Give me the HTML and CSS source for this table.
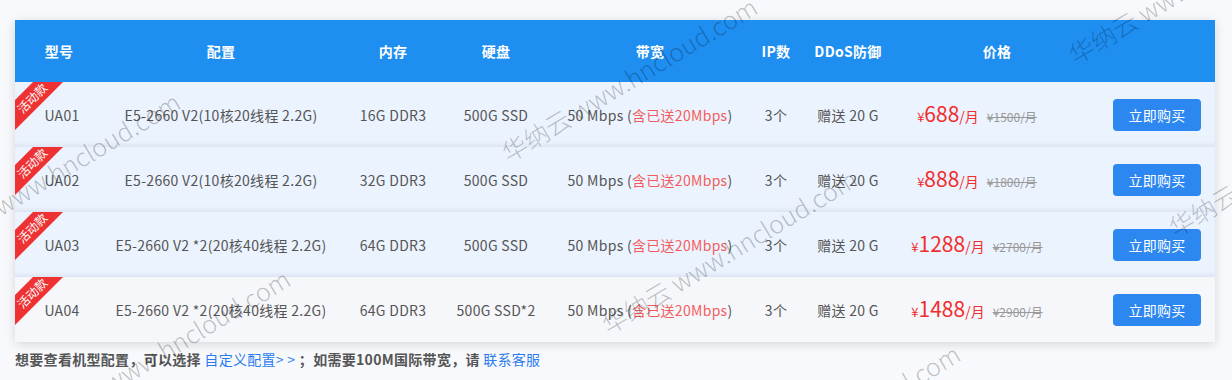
FILE: index.html
```html
<!DOCTYPE html>
<html lang="zh-CN">
<head>
<meta charset="utf-8">
<title>华纳云 产品价格</title>
<link rel="stylesheet" href="styles.css">
</head>
<body>
<div class="page">
  <div class="table">
    <div class="row head">
      <div>型号</div><div>配置</div><div>内存</div><div>硬盘</div><div>带宽</div><div>IP数</div><div>DDoS防御</div><div>价格</div><div></div>
    </div>
    <div class="row item">
      <div class="ribbon"><span>活动款</span></div>
      <div class="model">UA01</div><div>E5-2660 V2(10核20线程 2.2G)</div><div>16G DDR3</div><div>500G SSD</div>
      <div>50 Mbps (<span class="gift">含已送20Mbps</span>)</div><div>3个</div><div>赠送 20 G</div>
      <div class="price"><span class="yen">¥</span><span class="num">688</span><span class="unit">/月</span><span class="old">¥1500/月</span></div>
      <div><a class="buy">立即购买</a></div>
    </div>
    <div class="row item">
      <div class="ribbon"><span>活动款</span></div>
      <div class="model">UA02</div><div>E5-2660 V2(10核20线程 2.2G)</div><div>32G DDR3</div><div>500G SSD</div>
      <div>50 Mbps (<span class="gift">含已送20Mbps</span>)</div><div>3个</div><div>赠送 20 G</div>
      <div class="price"><span class="yen">¥</span><span class="num">888</span><span class="unit">/月</span><span class="old">¥1800/月</span></div>
      <div><a class="buy">立即购买</a></div>
    </div>
    <div class="row item">
      <div class="ribbon"><span>活动款</span></div>
      <div class="model">UA03</div><div>E5-2660 V2 *2(20核40线程 2.2G)</div><div>64G DDR3</div><div>500G SSD</div>
      <div>50 Mbps (<span class="gift">含已送20Mbps</span>)</div><div>3个</div><div>赠送 20 G</div>
      <div class="price"><span class="yen">¥</span><span class="num">1288</span><span class="unit">/月</span><span class="old">¥2700/月</span></div>
      <div><a class="buy">立即购买</a></div>
    </div>
    <div class="row item alt">
      <div class="ribbon"><span>活动款</span></div>
      <div class="model">UA04</div><div>E5-2660 V2 *2(20核40线程 2.2G)</div><div>64G DDR3</div><div>500G SSD*2</div>
      <div>50 Mbps (<span class="gift">含已送20Mbps</span>)</div><div>3个</div><div>赠送 20 G</div>
      <div class="price"><span class="yen">¥</span><span class="num">1488</span><span class="unit">/月</span><span class="old">¥2900/月</span></div>
      <div><a class="buy">立即购买</a></div>
    </div>
  </div>
  <p class="note"><b>想要查看机型配置，可以选择</b> <a class="link">自定义配置&gt; &gt;</a> <b>；如需要100M国际带宽，请</b> <a class="link">联系客服</a></p>
</div>
<div class="marks">
  <span class="wm w1">华纳云 www.hncloud.com</span>
  <span class="wm w2">华纳云 www.hncloud.com</span>
  <span class="wm w3">华纳云 www.hncloud.com</span>
  <span class="wm w4">华纳云 www.hncloud.com</span>
  <span class="wm w5">华纳云 www.hncloud.com</span>
  <span class="wm w6">华纳云 www.hncloud.com</span>
  <span class="wm w7">华纳云 www.hncloud.com</span>
</div>
</body>
</html>
```
FILE: styles.css
```css
html, body {
  margin: 0;
  padding: 0;
  background: #f8f9fc;
  font-family: "Noto Sans CJK SC", "Noto Sans", sans-serif;
  overflow: hidden;
}
.page {
  padding: 20px 17px 0 15px;
  letter-spacing: 0.3px;
}
.table {
  width: 1200px;
  box-shadow: 0 2px 10px rgba(0, 0, 0, 0.14);
}
.row {
  display: grid;
  grid-template-columns: 88px 236px 108px 98px 210px 42px 102px 196px 120px;
  align-items: center;
  text-align: center;
  position: relative;
}
.row > div {
  white-space: nowrap;
}
.head {
  height: 62px;
  background: #1e8ef0;
  color: #fff;
  font-weight: bold;
  font-size: 14px;
}
.item {
  height: 65px;
  background: #ebf3fe;
  color: #555;
  font-size: 14px;
  box-shadow: inset 0 -4px 4px -2px rgba(120, 130, 160, 0.14);
}
.item.alt {
  background: #f5f7fb;
  box-shadow: none;
}
.model {
  padding-left: 6px;
}
.gift {
  color: #f35d5d;
}
.ribbon {
  position: absolute;
  left: 0;
  top: 0;
  width: 48px;
  height: 48px;
  background: #ee3233;
  clip-path: polygon(18px 0, 48px 0, 0 48px, 0 18px);
}
.ribbon span {
  position: absolute;
  left: -4px;
  top: 9px;
  width: 42px;
  font-size: 12px;
  line-height: 14px;
  letter-spacing: 0;
  color: #fff;
  transform: rotate(-45deg);
  text-align: center;
}
.price {
  padding-right: 40px;
  color: #f22d2d;
  display: flex;
  justify-content: center;
  align-items: baseline;
  letter-spacing: 0;
}
.yen {
  font-size: 13px;
}
.num {
  font-size: 21px;
  line-height: 1;
}
.unit {
  font-size: 14px;
}
.old {
  margin-left: 8px;
  font-size: 12px;
  color: #999;
  text-decoration: line-through;
}
.buy {
  display: inline-block;
  width: 88px;
  height: 32px;
  line-height: 32px;
  border-radius: 4px;
  background: #2d87f1;
  color: #fff;
  font-size: 14px;
  margin-left: 4px;
}
.note {
  margin: 7px 0 0;
  font-size: 14px;
  line-height: 20px;
  color: #555;
}
.note b {
  font-weight: bold;
}
.link {
  color: #2b7cf0;
}
.marks {
  position: absolute;
  left: 0;
  top: 0;
  width: 1232px;
  height: 380px;
  pointer-events: none;
  overflow: hidden;
}
.wm {
  position: absolute;
  font-size: 25px;
  line-height: 25px;
  color: rgba(0, 0, 0, 0.24);
  font-family: "Noto Sans CJK SC", "Noto Sans", sans-serif;
  font-weight: 300;
  white-space: nowrap;
  transform-origin: 0 100%;
  transform: rotate(-31deg);
}
.w1 { left: 510px; top: 140px; }
.w2 { left: 1077px; top: 42px; }
.w3 { left: -67px; top: 235px; }
.w4 { left: 610px; top: 312px; }
.w5 { left: 43px; top: 412px; }
.w6 { left: 1177px; top: 215px; }
.w7 { left: 713px; top: 487px; }
```
